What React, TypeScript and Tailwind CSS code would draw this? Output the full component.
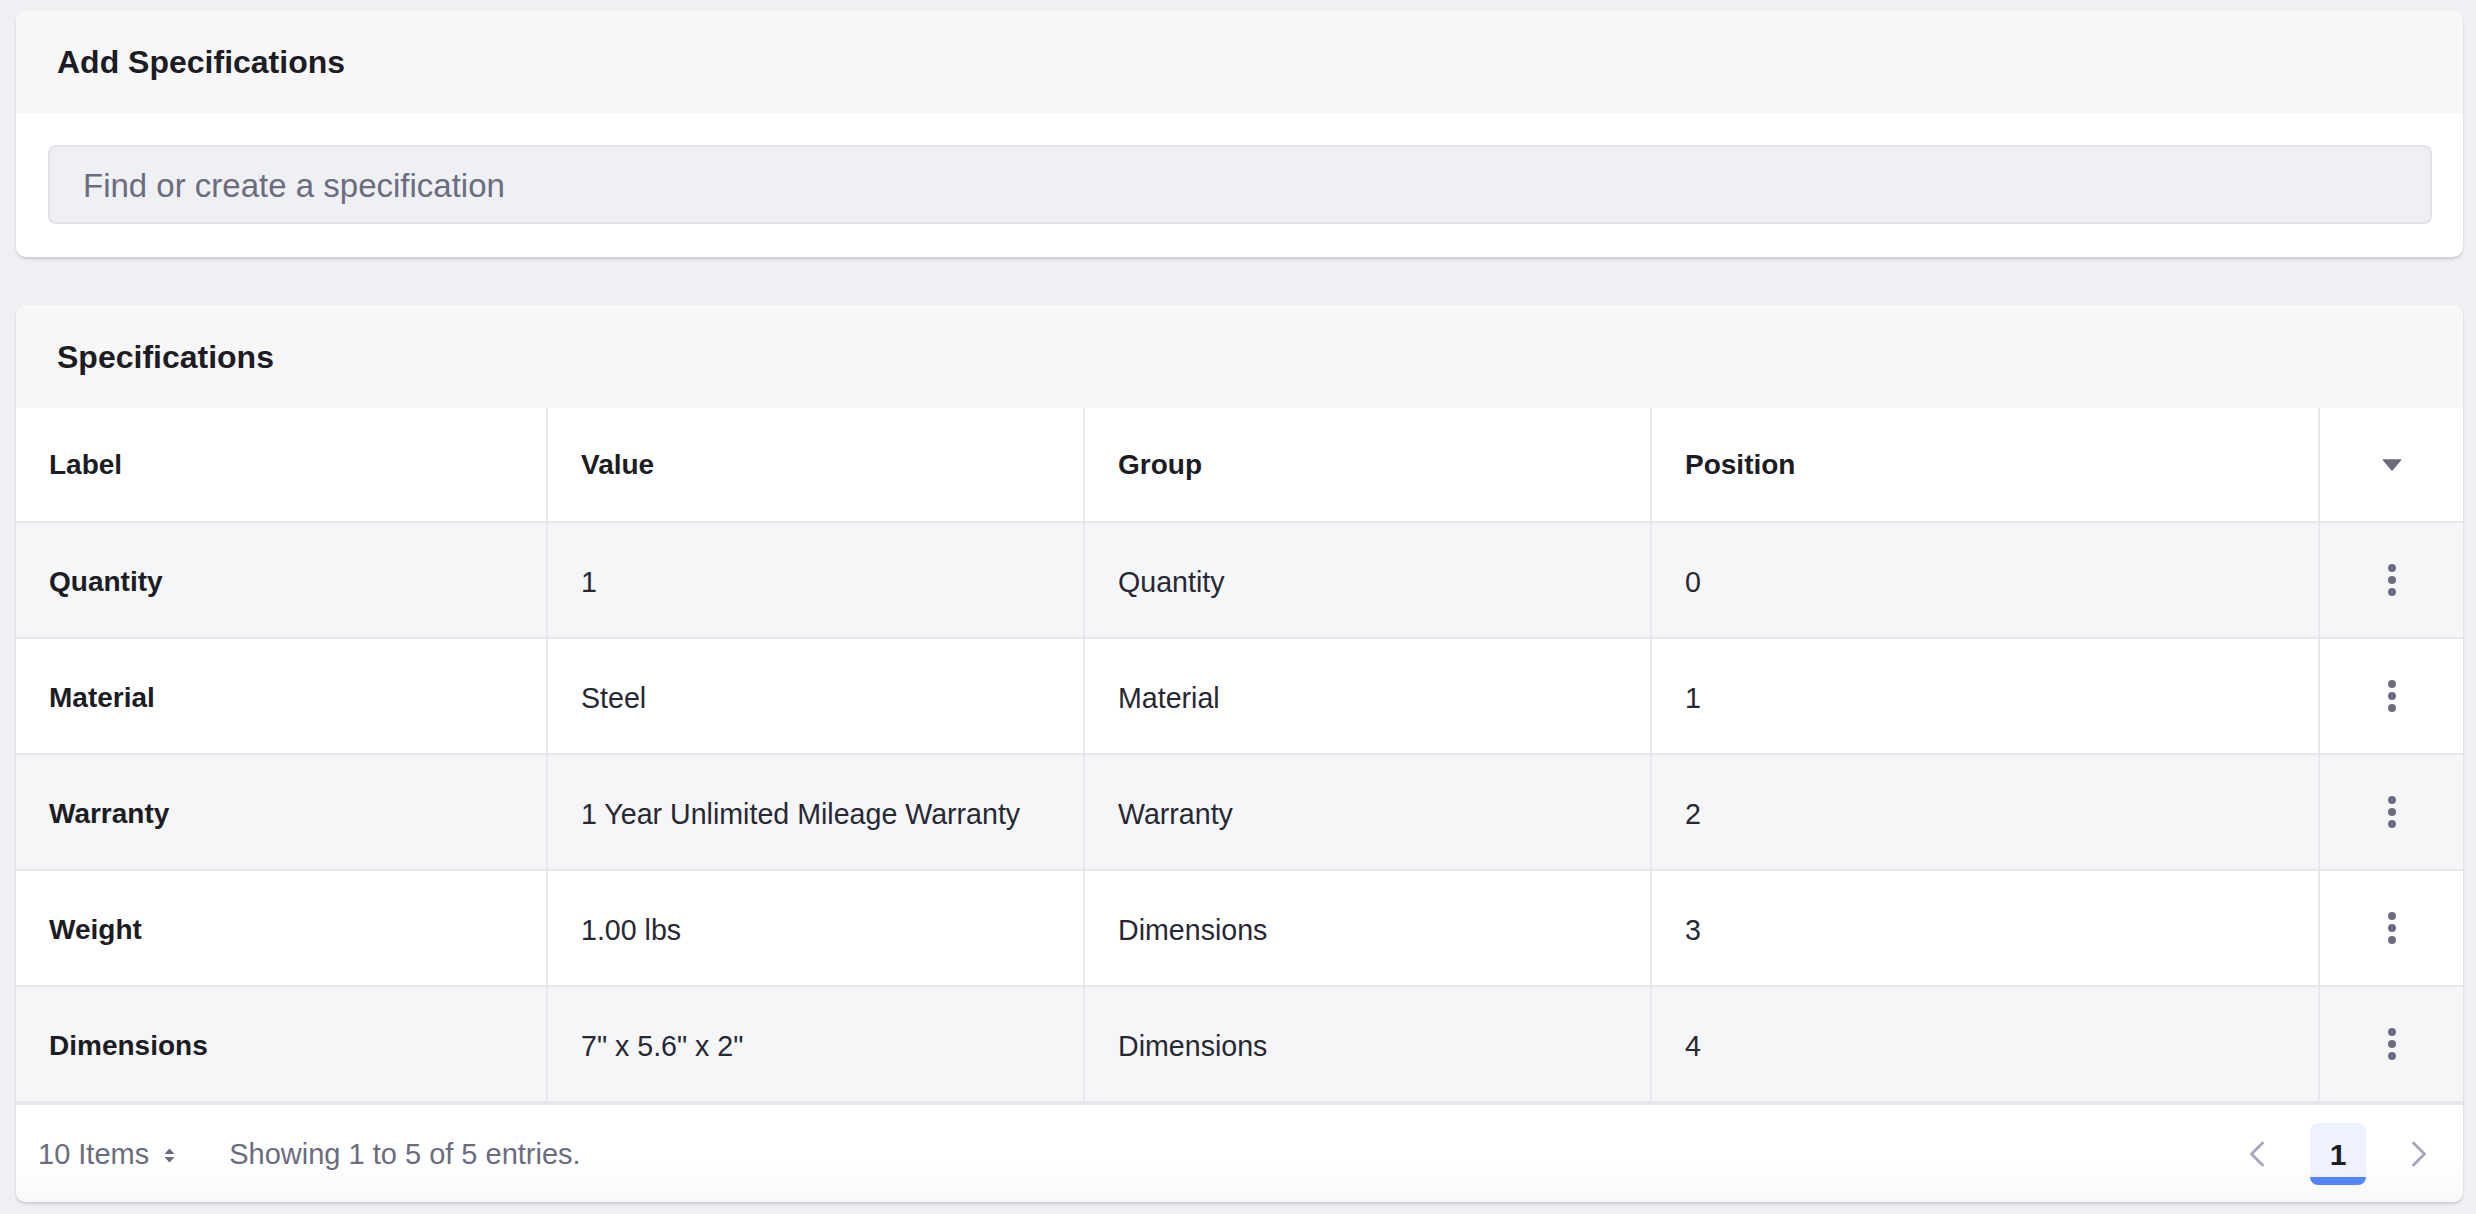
const rows = [
  { label: "Quantity", value: "1", group: "Quantity", position: "0" },
  { label: "Material", value: "Steel", group: "Material", position: "1" },
  {
    label: "Warranty",
    value: "1 Year Unlimited Mileage Warranty",
    group: "Warranty",
    position: "2",
  },
  { label: "Weight", value: "1.00 lbs", group: "Dimensions", position: "3" },
  {
    label: "Dimensions",
    value: '7" x 5.6" x 2"',
    group: "Dimensions",
    position: "4",
  },
];

function CaretDown() {
  return (
    <svg width="20" height="12" viewBox="0 0 20 12">
      <path
        d="M1.5 1h17l-8.5 10z"
        fill="#6b6c7e"
        stroke="#6b6c7e"
        strokeWidth="1.5"
        strokeLinejoin="round"
      />
    </svg>
  );
}

function Kebab() {
  return (
    <svg width="8" height="32" viewBox="0 0 8 32">
      <circle cx="4" cy="4" r="4" fill="#6b6c7e" />
      <circle cx="4" cy="16" r="4" fill="#6b6c7e" />
      <circle cx="4" cy="28" r="4" fill="#6b6c7e" />
    </svg>
  );
}

function SortIcon() {
  return (
    <svg width="11" height="15" viewBox="0 0 11 15">
      <path d="M5.5 0.5L10.5 6H0.5z" fill="#6b6c7e" />
      <path d="M5.5 14.5L10.5 9H0.5z" fill="#6b6c7e" />
    </svg>
  );
}

function Chevron({ dir }: { dir: "left" | "right" }) {
  return (
    <svg width="16" height="26" viewBox="0 0 16 26">
      <path
        d={dir === "left" ? "M13.5 2 L2.5 13 L13.5 24" : "M2.5 2 L13.5 13 L2.5 24"}
        stroke="#a7a9bc"
        strokeWidth="3"
        fill="none"
        strokeLinecap="round"
        strokeLinejoin="round"
      />
    </svg>
  );
}

export default function App() {
  return (
    <div className="min-h-screen bg-[#eef0f4] pt-[11px] pb-[12px] pl-[16px] pr-[13px] font-['Liberation_Sans',Arial,sans-serif] text-[#272833]">
      {/* Add specifications */}
      <div className="rounded-[10px] bg-white shadow-[0_2px_3px_rgba(0,0,0,0.16)] overflow-hidden">
        <div className="h-[102px] bg-[#f7f7f7] flex items-center pl-[41px]">
          <h2 className="text-[32px] font-bold text-[#1c1c24]">
            Add Specifications
          </h2>
        </div>
        <div className="pt-[32px] pb-[33px] pl-[32px] pr-[31px]">
          <input
            type="text"
            placeholder="Find or create a specification"
            className="block w-full h-[79px] rounded-[8px] border-2 border-[#e2e3ea] bg-[#eff0f4] pl-[33px] pt-[3px] text-[33px] text-[#272833] placeholder-[#6b6c7e] outline-none"
          />
        </div>
      </div>

      {/* Specifications table */}
      <div className="mt-[48px] rounded-[10px] bg-white shadow-[0_2px_3px_rgba(0,0,0,0.16)] overflow-hidden">
        <div className="h-[103px] bg-[#f7f7f7] flex items-center pl-[41px]">
          <h2 className="text-[32px] font-bold text-[#1c1c24]">
            Specifications
          </h2>
        </div>

        <div className="grid grid-cols-[530px_537px_567px_668px_1fr] text-[28.6px]">
          <div className="h-[115px] flex items-center pl-[33px] border-b-2 border-[#e7e7ed] text-[28px] font-bold text-[#1c1c24]">
            Label
          </div>
          <div className="h-[115px] flex items-center pl-[33px] border-b-2 border-l-2 border-[#e7e7ed] text-[28px] font-bold text-[#1c1c24]">
            Value
          </div>
          <div className="h-[115px] flex items-center pl-[33px] border-b-2 border-l-2 border-[#e7e7ed] text-[28px] font-bold text-[#1c1c24]">
            Group
          </div>
          <div className="h-[115px] flex items-center pl-[33px] border-b-2 border-l-2 border-[#e7e7ed] text-[28px] font-bold text-[#1c1c24]">
            Position
          </div>
          <div className="h-[115px] flex items-center justify-center border-b-2 border-l-2 border-[#e7e7ed]">
            <CaretDown />
          </div>

          {rows.map((row, i) => {
            const bg = i % 2 === 0 ? "bg-[#f5f6f8]" : "bg-white";
            return (
              <div key={row.label} className="contents">
                <div
                  className={`${bg} h-[116px] flex items-center pl-[33px] pt-[4px] border-b-2 border-[#e7e7ed] text-[28px] font-bold text-[#1c1c24]`}
                >
                  {row.label}
                </div>
                <div
                  className={`${bg} h-[116px] flex items-center pl-[33px] pt-[4px] border-b-2 border-l-2 border-[#e7e7ed]`}
                >
                  {row.value}
                </div>
                <div
                  className={`${bg} h-[116px] flex items-center pl-[33px] pt-[4px] border-b-2 border-l-2 border-[#e7e7ed]`}
                >
                  {row.group}
                </div>
                <div
                  className={`${bg} h-[116px] flex items-center pl-[33px] pt-[4px] border-b-2 border-l-2 border-[#e7e7ed]`}
                >
                  {row.position}
                </div>
                <div
                  className={`${bg} h-[116px] flex items-center justify-center border-b-2 border-l-2 border-[#e7e7ed]`}
                >
                  <Kebab />
                </div>
              </div>
            );
          })}
        </div>

        {/* footer / pagination */}
        <div className="h-[99px] border-t-2 border-[#e7e7ed] bg-gradient-to-b from-white from-60% to-[#f8f8f9] flex items-center justify-between pl-[22px] pr-[36px] text-[29px] text-[#6b6c7e]">
          <div className="flex items-center pt-[3px]">
            <span>10 Items</span>
            <span className="ml-[15px] flex items-center">
              <SortIcon />
            </span>
            <span className="ml-[54px]">Showing 1 to 5 of 5 entries.</span>
          </div>
          <div className="flex items-center">
            <Chevron dir="left" />
            <div className="ml-[45px] mr-[45px] w-[56px] h-[62px] rounded-[8px] bg-[#eef2fe] border-b-[8px] border-[#5484ff] pt-[10px] flex items-center justify-center text-[30px] font-semibold text-[#1c1c24]">
              1
            </div>
            <Chevron dir="right" />
          </div>
        </div>
      </div>
    </div>
  );
}
